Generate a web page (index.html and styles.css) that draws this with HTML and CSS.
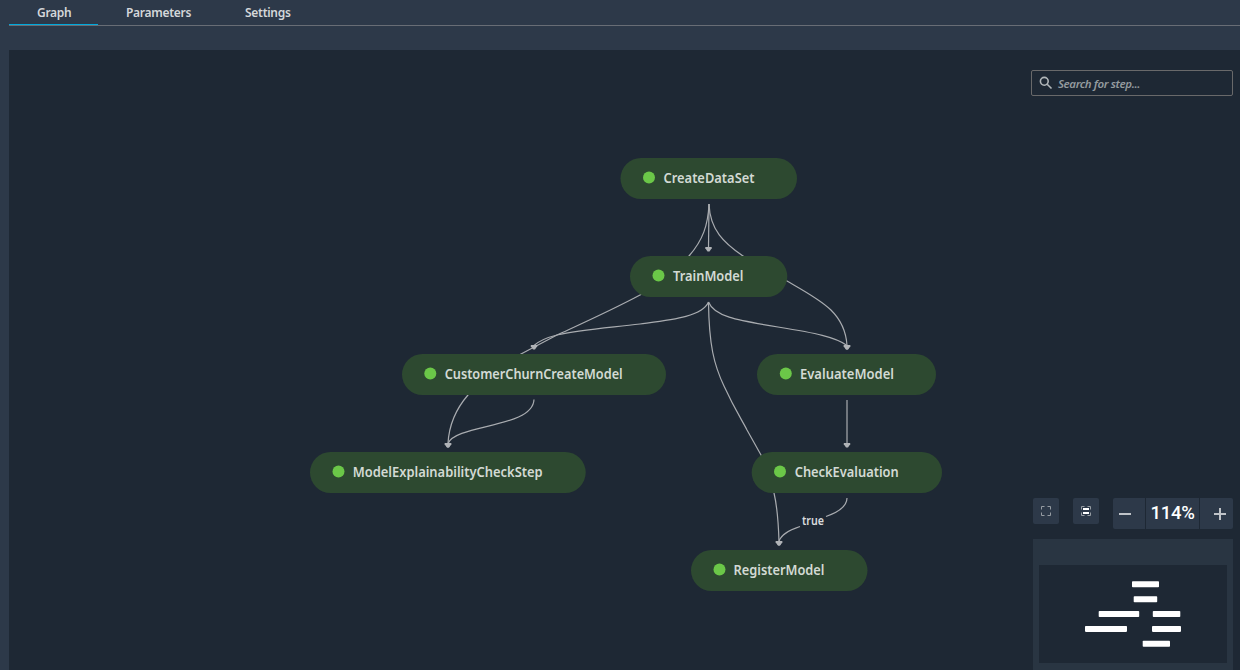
FILE: index.html
```html
<!DOCTYPE html>
<html lang="en">
<head>
<meta charset="utf-8">
<title>Pipeline graph</title>
<link rel="stylesheet" href="styles.css">
</head>
<body>
<nav class="tabs">
  <a class="tab tab-active">Graph</a>
  <a class="tab tab-params">Parameters</a>
  <a class="tab">Settings</a>
</nav>
<main class="canvas">
  <svg class="graph" width="1231" height="620" viewBox="9 50 1231 620">
    <defs>
      <marker id="arrow" markerUnits="userSpaceOnUse" markerWidth="8" markerHeight="6" refX="4" refY="1" orient="0">
        <path class="arrow" d="M.8 .5H7.200V1.700L5 5H3L.8 1.700Z"/>
      </marker>
    </defs>
    <g class="edges">
      <path marker-end="url(#arrow)" d="M709 204L708.500 247.500"/>
      <path marker-end="url(#arrow)" d="M709 204C710 230 724 243 743 256C758 266 773 273 787 281C820 300 845 312 847 345.500"/>
      <path marker-end="url(#arrow)" d="M709 204C708 225 703 240 689 256C676 271 661 284 641 294.500C610 311 583 323 557 335L521 354C500 365 480 378 468 395C455 410 449 425 448 443.500"/>
      <path marker-end="url(#arrow)" d="M708.500 302C702 317 670 320 640 324C606 328 578 330 557 335C545 338 539 341 534 345.500"/>
      <path marker-end="url(#arrow)" d="M708.500 302C714 316 735 320 778 327C815 333 836 337 847 345.500"/>
      <path marker-end="url(#arrow)" d="M708.500 302C709 345 714 365 724 386C735 410 742 420 747 430L761 455C767 467 771 478 774 493C778 510 778.500 525 779 541.500"/>
      <path marker-end="url(#arrow)" d="M847 400V443.500"/>
      <path marker-end="url(#arrow)" d="M534 399.500C533 428 456 424 448 443.500"/>
      <path d="M847 498C847 506 839 512 826 516.500"/>
      <path marker-end="url(#arrow)" d="M800 526.500C790 530 781 534 779 541.500"/>
    </g>
    <g class="nodes">
      <rect x="620.500" y="158" width="176.500" height="41" rx="20.500"/>
      <rect x="630" y="256" width="157.300" height="41" rx="20.500"/>
      <rect x="402" y="354" width="264" height="41" rx="20.500"/>
      <rect x="757" y="354" width="179" height="41" rx="20.500"/>
      <rect x="310" y="452" width="275.700" height="41" rx="20.500"/>
      <rect x="751.700" y="452" width="190.300" height="41" rx="20.500"/>
      <rect x="691" y="550" width="176.500" height="41" rx="20.500"/>
    </g>
    <g class="dots">
      <circle cx="649" cy="177.500" r="6"/>
      <circle cx="658.500" cy="275.500" r="6"/>
      <circle cx="430.300" cy="373.500" r="6"/>
      <circle cx="785.800" cy="373.500" r="6"/>
      <circle cx="338.500" cy="471.500" r="6"/>
      <circle cx="780" cy="471.500" r="6"/>
      <circle cx="719.500" cy="569.500" r="6"/>
    </g>
    <g class="labels">
      <text x="663.500" y="183" textLength="91" lengthAdjust="spacingAndGlyphs">CreateDataSet</text>
      <text x="673" y="281" textLength="70.500" lengthAdjust="spacingAndGlyphs">TrainModel</text>
      <text x="444.700" y="379" textLength="178" lengthAdjust="spacingAndGlyphs">CustomerChurnCreateModel</text>
      <text x="800" y="379" textLength="94" lengthAdjust="spacingAndGlyphs">EvaluateModel</text>
      <text x="352.700" y="477" textLength="190" lengthAdjust="spacingAndGlyphs">ModelExplainabilityCheckStep</text>
      <text x="794.700" y="477" textLength="104" lengthAdjust="spacingAndGlyphs">CheckEvaluation</text>
      <text x="733.500" y="575" textLength="91" lengthAdjust="spacingAndGlyphs">RegisterModel</text>
      <text class="edge-label" x="802" y="525" textLength="22" lengthAdjust="spacingAndGlyphs">true</text>
    </g>
  </svg>
  <aside class="overlay">
    <div class="search">
      <svg width="14" height="14" viewBox="0 0 14 14"><circle cx="5.300" cy="5.300" r="3.900"/><path d="M8.200 8.200L12.500 12.500"/></svg>
      <span>Search for step...</span>
    </div>
    <div class="controls">
      <div class="button">
        <svg width="12" height="12" viewBox="0 0 12 12"><path d="M1.500 4.500V1.500H4.500M7.500 1.500H10.500V4.500M10.500 7.500V10.500H7.500M4.500 10.500H1.500V7.500"/></svg>
      </div>
      <div class="button">
        <svg width="12" height="12" viewBox="0 0 12 12"><path d="M1.500 4.500V1.500H4.500M7.500 1.500H10.500V4.500M10.500 7.500V10.500H7.500M4.500 10.500H1.500V7.500"/><path class="bars" d="M3 4H9M3 8H9"/></svg>
      </div>
      <div class="zoom">
        <div class="zoom-step zoom-out"><svg width="12" height="12" viewBox="0 0 12 12"><path d="M0 6H12"/></svg></div>
        <div class="zoom-value"><span>114%</span></div>
        <div class="zoom-step zoom-in"><svg width="12" height="12" viewBox="0 0 12 12"><path d="M0 6H12M6 0V12"/></svg></div>
      </div>
    </div>
    <div class="minimap">
      <svg width="188" height="98" viewBox="1039 565 188 98">
        <rect x="1132" y="581.300" width="27" height="6" rx=".8"/>
        <rect x="1133.700" y="596.200" width="23.500" height="6" rx=".8"/>
        <rect x="1098.700" y="611" width="40.500" height="6" rx=".8"/>
        <rect x="1152.800" y="611" width="27.500" height="6" rx=".8"/>
        <rect x="1085" y="625.900" width="42" height="6" rx=".8"/>
        <rect x="1152" y="625.900" width="29" height="6" rx=".8"/>
        <rect x="1142.700" y="640.800" width="27.300" height="6" rx=".8"/>
      </svg>
    </div>
  </aside>
</main>
</body>
</html>
```
FILE: styles.css
```css
* { box-sizing: border-box; }
body {
  margin: 0;
  height: 670px;
  overflow: hidden;
  background: #2d3949;
  font-family: "Noto Sans", "Open Sans", sans-serif;
}
svg { display: block; }
.tabs {
  display: flex;
  height: 26px;
  margin-left: 9px;
  border-bottom: 1px solid #686d75;
}
.tab {
  height: 25px;
  padding: 0 28px;
  font-size: 12px;
  font-weight: 600;
  line-height: 25px;
  letter-spacing: -.28px;
  color: #d4d7da;
  white-space: nowrap;
}
.tab-active {
  width: 89px;
  border-bottom: 1px solid #00a9dc;
}
.tab-params { width: 119px; }
.canvas {
  position: relative;
  height: 620px;
  margin: 24px 0 0 9px;
  background: #1e2834;
}
.edges path {
  fill: none;
  stroke: #a9acb0;
  stroke-width: 1.2;
}
.edges + .nodes { fill: #2d4930; }
.arrow {
  fill: #b0b3b7;
}
.dots { fill: #6bc748; }
.labels {
  fill: #d3dad4;
  font-size: 14px;
  font-weight: 600;
}
.labels .edge-label {
  font-size: 12px;
  fill: #d9dbdd;
}
.overlay {
  position: absolute;
  top: 20px;
  right: 7px;
  width: 202px;
  height: 600px;
  display: flex;
  flex-direction: column;
  align-items: flex-end;
}
.search {
  display: flex;
  align-items: center;
  gap: 5px;
  width: 202px;
  height: 26px;
  padding-left: 7px;
  border: 1px solid #69696a;
  border-radius: 2px;
  color: #949b9f;
  font-size: 11.5px;
  font-style: italic;
  font-weight: 600;
  letter-spacing: -.4px;
}
.search svg {
  fill: none;
  stroke: #b2b7ba;
  stroke-width: 1.6;
}
.controls {
  display: flex;
  gap: 14px;
  width: 200px;
  margin-top: 402px;
}
.button {
  display: grid;
  place-items: center;
  width: 26px;
  height: 26px;
  border-radius: 2px;
  background: #2d3949;
}
.button svg {
  fill: none;
  stroke: #969ca3;
  stroke-width: 1;
}
.button .bars {
  stroke: #fff;
  stroke-width: 2;
}
.zoom {
  display: grid;
  grid-template-columns: 32px 53px 33px;
  gap: 1px;
  height: 31px;
}
.zoom-step, .zoom-value {
  display: flex;
  align-items: center;
  justify-content: center;
  background: #2d3949;
}
.zoom-step { padding-top: 1px; }
.zoom-out { padding-right: 8px; border-radius: 2px 0 0 2px; }
.zoom-in { padding-left: 7px; border-radius: 0 2px 2px 0; }
.zoom-step path {
  fill: none;
  stroke: #bfc3c8;
  stroke-width: 2;
}
.zoom-value {
  padding-bottom: 1px;
  color: #fff;
  font-family: Roboto, sans-serif;
  font-size: 18.5px;
  font-weight: 500;
  letter-spacing: -.3px;
  line-height: 28px;
}
.minimap {
  width: 200px;
  height: 131px;
  margin-top: 10px;
  padding: 26px 6px 7px;
  background: #293542;
}
.minimap svg {
  background: #1e2834;
  fill: #fff;
}
```
